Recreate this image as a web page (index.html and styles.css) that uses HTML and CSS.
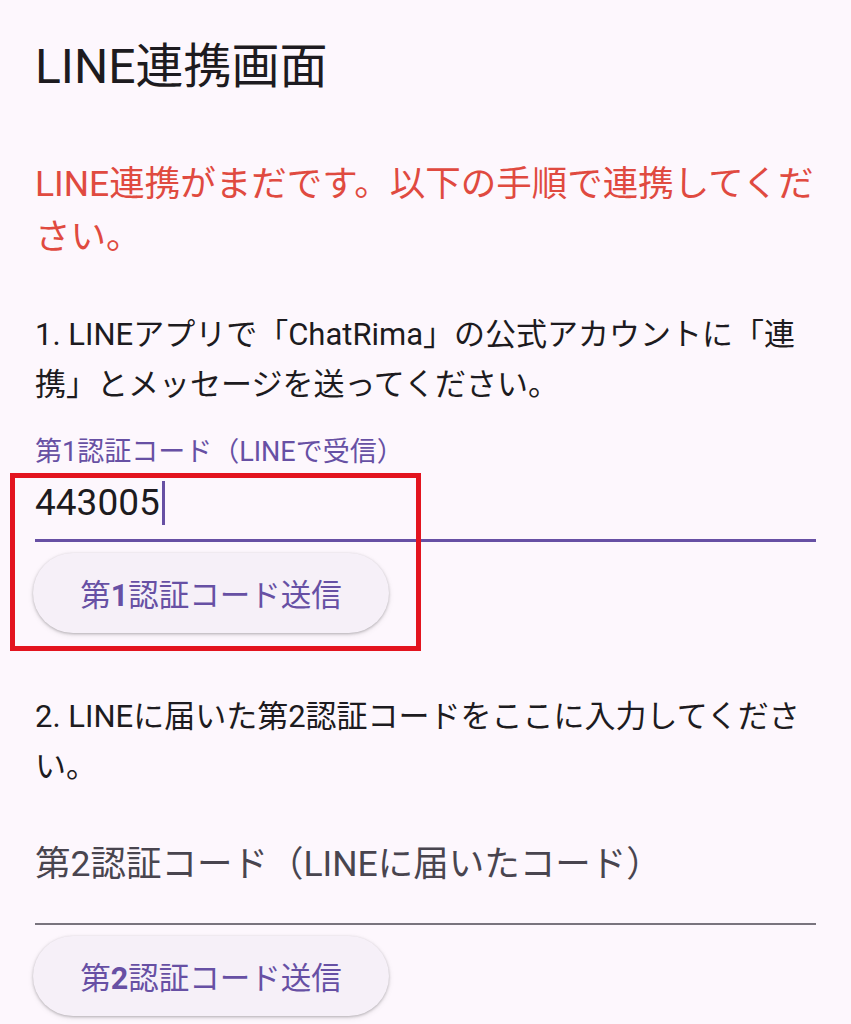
FILE: index.html
```html
<!DOCTYPE html>
<html lang="ja">
<head>
    <meta charset="UTF-8">
    <meta name="viewport" content="width=device-width, initial-scale=1.0">
    <title>LINE連携画面</title>
    <link rel="stylesheet" href="styles.css">
</head>
<body>

<div class="screen">
    <h1 class="title">LINE連携画面</h1>

    <p class="warning">LINE連携がまだです。以下の手順で連携してください。</p>

    <p class="step">1. LINEアプリで「ChatRima」の公式アカウントに「連携」とメッセージを送ってください。</p>

    <div class="block">
        <div class="field-label">第1認証コード（LINEで受信）</div>
        <div class="field active">
            <span class="value">443005</span><span class="caret"></span>
        </div>
        <button class="pill">第<span class="num">1</span>認証コード送信</button>
        <div class="mark"></div>
    </div>

    <p class="step step-2">2. LINEに届いた第2認証コードをここに入力してください。</p>

    <div class="field empty">
        <span class="placeholder">第2認証コード（LINEに届いたコード）</span>
    </div>
    <button class="pill">第<span class="num">2</span>認証コード送信</button>
</div>

<div class="navbar"></div>

</body>
</html>
```

FILE: styles.css
```css
/* Pantalla de enlace LINE */
body {
    margin: 0;
    background-color: #fdf7fd;
    font-family: Roboto, "Noto Sans CJK JP", sans-serif;
    color: #1d1b20;
    overflow: hidden;
}
.screen {
    padding: 0 35px;
    height: 1017px;
}
.title {
    margin: 37px 0 0;
    font-size: 48px;
    font-weight: 400;
    line-height: 60px;
}
.warning {
    margin: 61px 0 0;
    font-size: 35.5px;
    line-height: 53px;
    color: #e04a40;
}
.step {
    margin: 46px 0 0;
    font-size: 31px;
    line-height: 50px;
}
.step-2 {
    margin-top: 59px;
}
.block {
    position: relative;
}
.field-label {
    margin-top: 27px;
    font-size: 27px;
    line-height: 30px;
    color: #6750a4;
}
.field {
    display: flex;
    align-items: center;
    height: 40px;
    border-bottom: 2px solid #79747e;
}
.field.active {
    padding: 16px 0;
    border-bottom: 3px solid #6750a4;
}
.field.empty {
    padding: 52px 0 39px;
}
.value {
    font-size: 37px;
    line-height: 40px;
}
.caret {
    display: inline-block;
    width: 3px;
    height: 44px;
    margin-left: 2px;
    background-color: #6750a4;
}
.placeholder {
    font-size: 35.5px;
    line-height: 40px;
    color: #49454f;
}
.pill {
    display: block;
    width: 356px;
    height: 80px;
    margin-top: 11px;
    margin-left: -2px;
    border: none;
    border-radius: 40px;
    background-color: #f6f0f8;
    box-shadow: 0 1px 3px rgba(0, 0, 0, 0.25), 0 2px 6px rgba(0, 0, 0, 0.08);
    font-family: Roboto, "Noto Sans CJK JP", sans-serif;
    font-size: 30.5px;
    font-weight: 400;
    color: #6750a4;
    cursor: pointer;
}
.pill .num {
    font-weight: 700;
}
/* recuadro rojo de anotación */
.mark {
    position: absolute;
    left: -25px;
    top: 36px;
    width: 401px;
    height: 168px;
    border: 5px solid #e3141f;
}
.navbar {
    height: 7px;
    background-color: #dedcdf;
}
```
